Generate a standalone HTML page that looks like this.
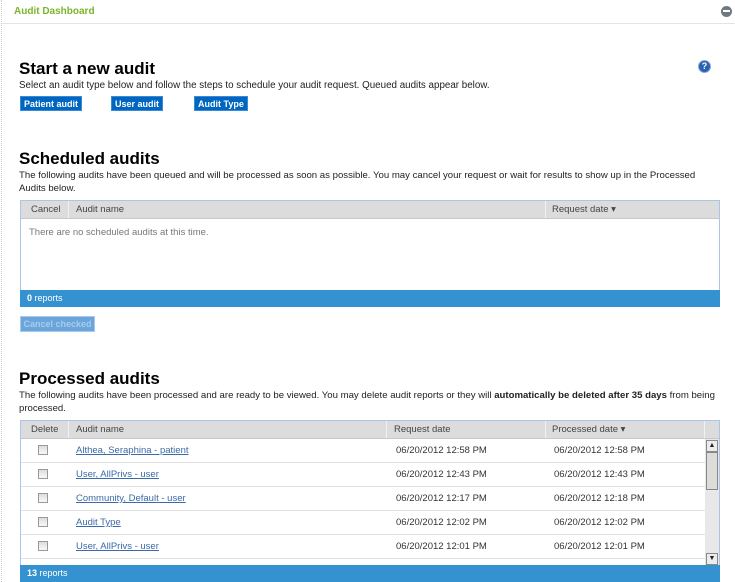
<!DOCTYPE html>
<html><head><style>
*{margin:0;padding:0;box-sizing:border-box}
body{width:735px;height:582px;background:#fff;font-family:"Liberation Sans",sans-serif;font-size:10px;color:#222;position:relative;overflow:hidden}
.abs{position:absolute}
.lb{left:1px;top:0;width:1px;height:582px;border-left:1px dotted #ccc}
h1{position:absolute;font-size:17px;font-weight:bold;color:#000;left:19px}
.p{position:absolute;left:19px;font-size:9.8px;color:#222;line-height:13px;width:700px}
.btn{position:absolute;top:96px;height:15px;background:#0066c0;color:#fff;font-weight:bold;font-size:9px;line-height:15px;padding:0 3px;border:1px solid #3a8ad8}
.tbl{position:absolute;left:20px;width:700px;border:1px solid #a9c6e8}
.th{height:18px;background:#dcdcdc;border-bottom:1px solid #c8c8c8;position:relative;color:#444;font-size:9.5px}
.th span{position:absolute;top:3px}
.sep{position:absolute;top:0;width:1px;height:17px;background:#f2f2f2}
.foot{position:absolute;left:20px;width:700px;height:17px;background:#3592d0;color:#fff;font-size:9px;line-height:17px;padding-left:7px}
.row{position:absolute;left:0;width:684px;height:24px;border-bottom:1px solid #e2e2e2;font-size:9.5px;color:#333}
.row span{position:absolute;top:6px}
.row a{color:#3b6aa8;text-decoration:underline}
.cb{position:absolute;left:17px;top:6px;width:10px;height:10px;border:1px solid #999;background:linear-gradient(#ddd,#f8f8f8)}
</style></head><body>
<div class="abs lb"></div>
<div class="abs" style="left:14px;top:6px;color:#7ab52a;font-weight:bold;font-size:10px">Audit Dashboard</div>
<div class="abs" style="left:2px;top:23px;width:733px;height:1px;background:#e4e4e4"></div>
<div class="abs" style="left:721px;top:6px;width:11px;height:11px;border-radius:50%;background:#6e7a80"><div style="position:absolute;left:2px;top:4px;width:7px;height:2px;background:#fff"></div></div>
<div class="abs" style="left:698px;top:60px;width:13px;height:13px;border-radius:50%;background:#2a62b0;border:1px solid #89a8d8;color:#fff;font-size:9px;font-weight:bold;text-align:center;line-height:11px">?</div>

<h1 style="top:59px">Start a new audit</h1>
<div class="p" style="top:79px">Select an audit type below and follow the steps to schedule your audit request. Queued audits appear below.</div>
<div class="btn" style="left:20px">Patient audit</div>
<div class="btn" style="left:111px">User audit</div>
<div class="btn" style="left:194px">Audit Type</div>

<h1 style="top:149px">Scheduled audits</h1>
<div class="p" style="top:169px;width:702px;font-size:9.6px">The following audits have been queued and will be processed as soon as possible. You may cancel your request or wait for results to show up in the Processed Audits below.</div>
<div class="tbl" style="top:200px;height:91px">
 <div class="th"><span style="left:10px">Cancel</span><div class="sep" style="left:47px"></div><span style="left:55px">Audit name</span><div class="sep" style="left:524px"></div><span style="left:531px">Request date ▾</span></div>
 <div style="position:absolute;left:8px;top:26px;color:#777;font-size:9.5px">There are no scheduled audits at this time.</div>
</div>
<div class="foot" style="top:290px"><b>0</b> reports</div>
<div class="abs" style="left:20px;top:316px;width:75px;height:16px;background:#6aa6dc;border:1px solid #a8c8ec;color:#a9cbeb;font-weight:bold;font-size:9px;line-height:14px;text-align:center">Cancel checked</div>

<h1 style="top:369px">Processed audits</h1>
<div class="p" style="top:389px;width:714px;font-size:9.6px">The following audits have been processed and are ready to be viewed. You may delete audit reports or they will <b>automatically be deleted after 35 days</b> from being processed.</div>
<div class="tbl" style="top:420px;height:146px;overflow:hidden">
 <div class="th"><span style="left:10px">Delete</span><div class="sep" style="left:47px"></div><span style="left:55px">Audit name</span><div class="sep" style="left:365px"></div><span style="left:373px">Request date</span><div class="sep" style="left:524px"></div><span style="left:531px">Processed date ▾</span><div class="sep" style="left:683px"></div></div>
 <div class="row" style="top:18px"><div class="cb"></div><span style="left:55px"><a>Althea, Seraphina - patient</a></span><span style="left:375px">06/20/2012 12:58 PM</span><span style="left:533px">06/20/2012 12:58 PM</span></div>
 <div class="row" style="top:42px"><div class="cb"></div><span style="left:55px"><a>User, AllPrivs - user</a></span><span style="left:375px">06/20/2012 12:43 PM</span><span style="left:533px">06/20/2012 12:43 PM</span></div>
 <div class="row" style="top:66px"><div class="cb"></div><span style="left:55px"><a>Community, Default - user</a></span><span style="left:375px">06/20/2012 12:17 PM</span><span style="left:533px">06/20/2012 12:18 PM</span></div>
 <div class="row" style="top:90px"><div class="cb"></div><span style="left:55px"><a>Audit Type</a></span><span style="left:375px">06/20/2012 12:02 PM</span><span style="left:533px">06/20/2012 12:02 PM</span></div>
 <div class="row" style="top:114px"><div class="cb"></div><span style="left:55px"><a>User, AllPrivs - user</a></span><span style="left:375px">06/20/2012 12:01 PM</span><span style="left:533px">06/20/2012 12:01 PM</span></div>
 <div style="position:absolute;left:684px;top:18px;width:14px;height:128px;background:#e8e8e8">
  <div style="position:absolute;left:1px;top:1px;width:12px;height:12px;background:#ececec;border:1px solid #888;font-size:7px;text-align:center;line-height:10px">▲</div>
  <div style="position:absolute;left:1px;top:13px;width:12px;height:38px;background:#dcdcd8;border:1px solid #888"></div>
  <div style="position:absolute;left:1px;top:114px;width:12px;height:12px;background:#ececec;border:1px solid #888;font-size:7px;text-align:center;line-height:10px">▼</div>
 </div>
</div>
<div class="foot" style="top:565px"><b>13</b> reports</div>
</body></html>
